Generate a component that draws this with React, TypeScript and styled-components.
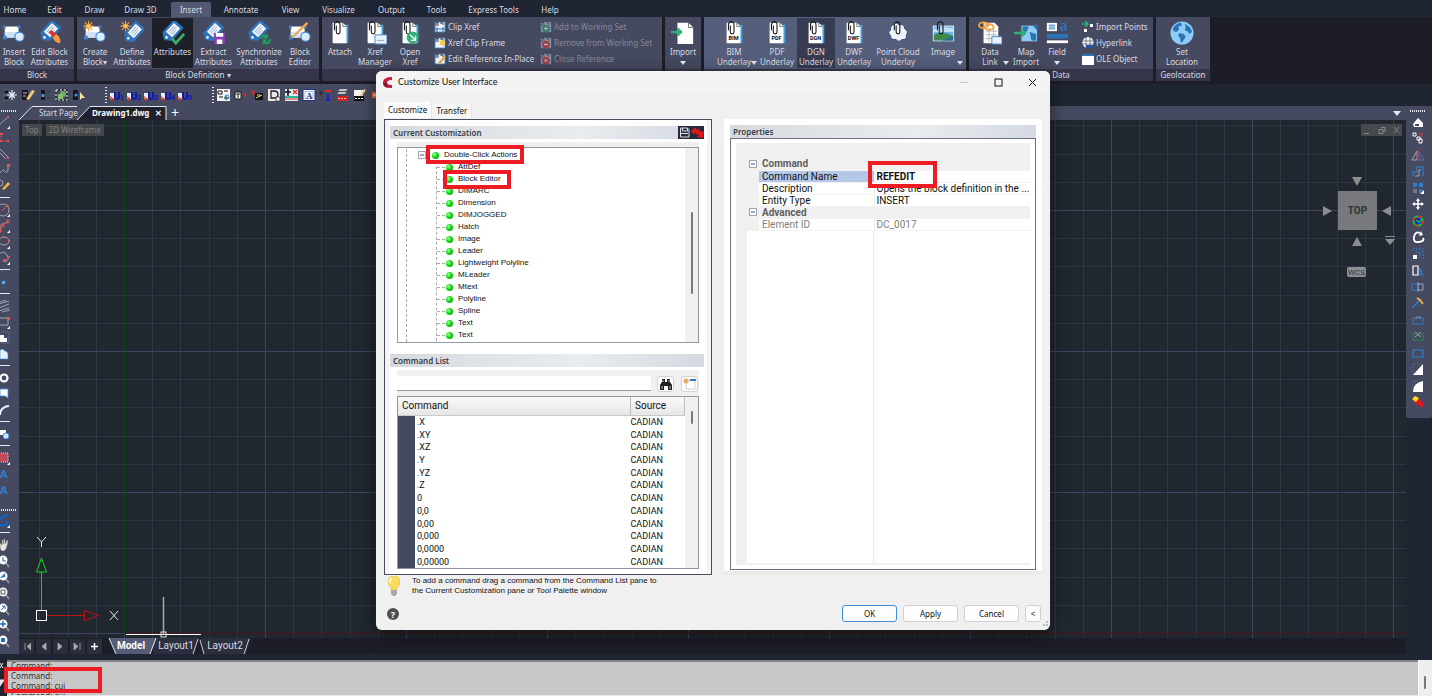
import React, { ReactNode } from "react";
import styled, { createGlobalStyle, css } from "styled-components";

const ui = `"Noto Sans", "Open Sans", sans-serif`;
const compact = `"Liberation Sans", Lato, sans-serif`;
const grid = `Roboto, "Liberation Sans", sans-serif`;
const slate = "#464a60";
const night = "#1f2532";
const ink = "#1c1d27";

const GlobalStyle = createGlobalStyle`
  * { box-sizing: border-box; }
  body { margin: 0; background: ${night}; font-family: ${ui}; font-size: 8px; line-height: 10px; }
  button, input { font: inherit; color: inherit; margin: 0; padding: 0; border: 0; background: none; }
  svg { display: block; flex: none; }
`;

const Page = styled.div`
  position: relative;
  display: flex;
  flex-direction: column;
  height: 100vh;
  min-height: 660px;
  overflow: hidden;
  background: ${night};
  color: #d9dbe2;
  border-right: 1px solid #fff;
`;

/* ---------- menu + ribbon ---------- */
const MenuBar = styled.nav`
  display: flex;
  align-items: flex-end;
  height: 17px;
  padding-top: 2px;
`;
const MenuItem = styled.button<{ $active?: boolean; $w: number }>`
  width: ${(p) => p.$w}px;
  height: 15px;
  border-radius: 2px 2px 0 0;
  background: ${(p) => (p.$active ? "#535973" : "transparent")};
  text-align: center;
  white-space: nowrap;
`;
const Ribbon = styled.div`
  display: flex;
  gap: 3px;
  height: 67px;
  background: ${ink};
`;
const Panel = styled.section<{ $w: number; $lit?: boolean }>`
  display: flex;
  flex-direction: column;
  flex: none;
  width: ${(p) => p.$w}px;
  height: 64px;
  background: ${(p) => (p.$lit ? "#555e7b" : slate)};
`;
const PanelBody = styled.div<{ $pad: number }>`
  display: flex;
  flex: 1;
  padding: 1px 0 1px ${(p) => p.$pad}px;
`;
const PanelLabel = styled.div`
  height: 12px;
  line-height: 11px;
  background: #353649;
  text-align: center;
`;
const BigButton = styled.button<{ $w: number; $dark?: string }>`
  position: relative;
  display: flex;
  flex-direction: column;
  align-items: center;
  flex: none;
  width: ${(p) => p.$w}px;
  padding-top: 3px;
  background: ${(p) => p.$dark || "transparent"};
  white-space: pre-line;
  gap: 2px;
`;
const SmallColumn = styled.div<{ $w: number; $pad?: number; $dim?: boolean }>`
  display: flex;
  flex-direction: column;
  width: ${(p) => p.$w}px;
  padding: 1px 0 0 ${(p) => p.$pad || 0}px;
  gap: 1px;
  ${(p) => p.$dim && css`color: #858897; svg { opacity: 0.6; }`}
`;
const SmallButton = styled.button`
  display: flex;
  align-items: center;
  gap: 2px;
  height: 15px;
  white-space: nowrap;
`;

/* ---------- quick tool strip ---------- */
const Strip = styled.div`
  height: 22px;
`;
const StripTools = styled.div`
  display: flex;
  align-items: center;
  width: 60%;
  height: 22px;
  padding-left: 2px;
  background: ${slate};
`;
const StripButton = styled.button`
  width: 17px;
  height: 16px;
  display: grid;
  place-items: center;
`;
const DotsV = styled.span<{ $ml: number }>`
  width: 2px;
  height: 16px;
  margin: 0 1px 0 ${(p) => p.$ml}px;
  background: repeating-linear-gradient(#e6e7ec 0 1px, transparent 1px 3px);
`;
const DotsH = styled.span`
  flex: none;
  width: 16px;
  height: 2px;
  margin: 4px 0 2px 1px;
  background: repeating-linear-gradient(90deg, #e6e7ec 0 1px, transparent 1px 2px);
`;

/* ---------- work area ---------- */
const Work = styled.div`
  display: flex;
  flex: 1;
  min-height: 0;
`;
const LeftBar = styled.aside`
  display: flex;
  flex-direction: column;
  width: 19px;
  background: ${slate};
  overflow: hidden;
`;
const SideTool = styled.button`
  flex: none;
  width: 12px;
  height: 16px;
  display: grid;
  place-items: center start;
  svg { overflow: visible; }
`;
const SideRule = styled.span`
  flex: none;
  width: 10px;
  height: 1px;
  margin: 3px 0 4px;
  background: #e6e7ec;
`;
const Spacer = styled.div<{ $h: number }>`
  flex: none;
  height: ${(p) => p.$h}px;
`;
const Center = styled.main`
  display: flex;
  flex-direction: column;
  flex: 1;
  min-width: 0;
`;
const RightSide = styled.aside`
  width: 26px;
`;
const RightBar = styled.div`
  display: flex;
  flex-direction: column;
  justify-content: space-between;
  align-items: center;
  height: 312px;
  padding: 0 3px 9px 0;
  background: ${slate};
  border-radius: 0 0 2px 2px;
  & > span { margin-bottom: 0; }
`;
const RightTool = styled.button`
  width: 16px;
  height: 14px;
  display: grid;
  place-items: center;
`;
const DocTabs = styled.div`
  display: flex;
  align-items: center;
  height: 14px;
  background: ${slate};
`;
const DocTab = styled.button<{ $w: number; $active?: boolean }>`
  position: relative;
  width: ${(p) => p.$w}px;
  height: 14px;
  text-align: left;
  padding-left: ${(p) => (p.$active ? 15 : 20)}px;
  white-space: nowrap;
  ${(p) => p.$active && css`font-weight: 700; color: #fff;`}
  & > svg { position: absolute; left: 0; top: 0; }
  & > span { position: relative; }
`;
const TabClose = styled.span`
  margin-left: 6px;
`;
const TabPlus = styled.button`
  font-size: 14px;
  line-height: 14px;
  margin-left: 4px;
  color: #fff;
`;
const TabMenu = styled.button`
  margin-left: auto;
  margin-right: 5px;
`;
const Canvas = styled.div`
  position: relative;
  flex: 1;
  min-height: 0;
  background: #21272f;
  overflow: hidden;
`;
const Fill = styled.svg`
  position: absolute;
  inset: 0;
  width: 100%;
  height: 100%;
`;
const ViewTags = styled.div`
  position: absolute;
  left: 3px;
  top: 4px;
  display: flex;
  gap: 4px;
`;
const ViewTag = styled.button`
  height: 12px;
  padding: 0 3px;
  background: #45484b;
  color: #7d8083;
  line-height: 12px;
`;
const WindowTag = styled.div`
  position: absolute;
  right: 4px;
  top: 4px;
  background: #474a4d;
`;
const CubeBox = styled.div`
  position: absolute;
  right: 10px;
  top: 56px;
`;
const Ucs = styled.svg`
  position: absolute;
  left: 14px;
  bottom: 0;
`;
const LayoutBar = styled.div`
  display: flex;
  align-items: center;
  height: 16px;
  background: ${ink};
  font-family: ${grid};
  font-size: 10px;
`;
const NavButton = styled.button`
  display: grid;
  place-items: center;
  width: 15px;
  height: 15px;
  margin-right: 2px;
  background: #2a2d3a;
`;
const LayoutTab = styled.button<{ $w: number; $overlap?: number; $active?: boolean }>`
  position: relative;
  z-index: ${(p) => (p.$active ? 1 : 0)};
  width: ${(p) => p.$w}px;
  height: 16px;
  margin-left: -${(p) => p.$overlap || 0}px;
  text-align: center;
  & > svg { position: absolute; inset: 0; }
  & > span { position: relative; ${(p) => p.$active && "font-weight: 700; color: #fff;"} }
`;

/* ---------- command line ---------- */
const CommandDock = styled.footer`
  position: relative;
  display: flex;
  height: 36px;
  margin-top: 6px;
`;
const DockGrip = styled.div`
  width: 7px;
  background: #1e2531;
  overflow: hidden;
`;
const CommandLog = styled.div`
  flex: 1;
  background: #c7c7c7;
  border-top: 2px solid #85868a;
  border-bottom: 1px solid #e8e8e8;
  color: #333;
  padding-left: 4px;
  overflow: hidden;
`;
const LogLines = styled.div`
  margin-top: -1px;
`;
const DockScroll = styled.div`
  width: 14px;
  border-left: 1px solid #fff;
  background: #efefef;
  padding: 16px 0 0 5px;
`;
const Thumb = styled.div<{ $h: number }>`
  width: 2px;
  height: ${(p) => p.$h}px;
  background: #77797c;
  border-radius: 1px;
`;
const RedBox = styled.div<{ $x: number; $y: number; $w: number; $h: number }>`
  position: absolute;
  left: ${(p) => p.$x}px;
  top: ${(p) => p.$y}px;
  width: ${(p) => p.$w}px;
  height: ${(p) => p.$h}px;
  border: 4px solid #ed1c24;
  pointer-events: none;
`;

/* ---------- dialog ---------- */
const Dialog = styled.div`
  position: absolute;
  left: 376px;
  top: 71px;
  width: 674px;
  display: flex;
  flex-direction: column;
  background: #f0f0f0;
  border-radius: 6px;
  color: #111;
  box-shadow: 0 4px 18px rgba(0, 0, 0, 0.55), 0 0 1px #888;
  overflow: hidden;
`;
const TitleBar = styled.header`
  display: flex;
  align-items: center;
  height: 22px;
  padding: 0 1px 0 7px;
  background: #f3f3f3;
`;
const Title = styled.h1`
  flex: 1;
  margin: 0 0 0 6px;
  font-family: Lato, ${ui};
  font-size: 9px;
  line-height: 12px;
  font-weight: 400;
`;
const TitleButton = styled.button`
  width: 34px;
  height: 22px;
  display: grid;
  place-items: center;
`;
const DialogTabs = styled.div`
  display: flex;
  align-items: flex-end;
  height: 25px;
  padding: 9px 0 0 8px;
`;
const DialogTab = styled.button<{ $on?: boolean }>`
  height: ${(p) => (p.$on ? 16 : 14)}px;
  padding: 0 4px;
  background: ${(p) => (p.$on ? "#fbfbfb" : "#f5f5f5")};
  border-right: 1px solid #e4e4e4;
`;
const Panes = styled.div`
  display: flex;
  gap: 12px;
  padding: 1px 8px 0;
  height: 457px;
`;
const LeftPane = styled.section`
  display: flex;
  flex-direction: column;
  width: 328px;
  padding: 6px 7px 4px 5px;
  background: #fff;
  border: 1px solid #4a4c5f;
  box-shadow: inset 4px 0 #f4f4f4, inset -4px 0 #f4f4f4;
`;
const RightPane = styled.section`
  display: flex;
  flex-direction: column;
  flex: 1;
  padding: 6px 6px 1px;
  background: #fff;
  border-bottom: 4px solid #ebebeb;
`;
const SectionHead = styled.h2`
  display: flex;
  align-items: center;
  justify-content: space-between;
  flex: none;
  height: 13px;
  margin: 0;
  padding-left: 3px;
  background: linear-gradient(90deg, #d6dade, #e9ecef 60%, #d4dae2);
  color: #39404a;
  font-size: 8px;
  line-height: 13px;
  font-weight: 600;
`;
const HeadTools = styled.span`
  display: flex;
  background: #272a3b;
`;
const HeadTool = styled.button`
  width: 13px;
  height: 13px;
`;
const Inset = styled.div<{ $mt: number }>`
  margin: ${(p) => p.$mt}px 5px 0 7px;
`;
const Band = styled.div<{ $h: number }>`
  height: ${(p) => p.$h}px;
  background: #f0f0f0;
`;
const TreeBox = styled.div`
  position: relative;
  display: flex;
  height: 196px;
  border: 1px solid #9298a1;
  font-family: ${compact};
`;
const TreeList = styled.ul`
  flex: 1;
  margin: 1px 0 0 8px;
  padding: 0 0 0 11px;
  list-style: none;
  border-left: 1px dashed #a9a9a9;
`;
const Branch = styled.ul`
  margin: 0 0 0 18px;
  padding: 0;
  list-style: none;
  border-left: 1px dashed #a9a9a9;
`;
const TreeRow = styled.li`
  display: flex;
  align-items: center;
  height: 12px;
  white-space: nowrap;
`;
const Stub = styled.span<{ $w: number }>`
  width: ${(p) => p.$w}px;
  border-top: 1px dashed #a9a9a9;
`;
const Bullet = styled.i<{ $ml: number }>`
  width: 7px;
  height: 7px;
  margin: 0 5px 0 ${(p) => p.$ml}px;
  border-radius: 50%;
  background: radial-gradient(circle at 35% 35%, #9dff9d, #12d812 45%, #088a08);
`;
const ScrollStrip = styled.div<{ $pt: number }>`
  width: 13px;
  padding: ${(p) => p.$pt}px 0 0 6px;
  background: #f0f0f0;
`;
const SearchRow = styled.div`
  display: flex;
  align-items: center;
  height: 17px;
  gap: 6px;
  background: #f0f0f0;
`;
const Search = styled.input`
  flex: 1;
  min-width: 0;
  height: 15px;
  padding: 0 4px;
  background: #fff;
  border-bottom: 1px solid #9b9b9b;
`;
const IconButton = styled.button`
  display: grid;
  place-items: center;
  width: 17px;
  height: 16px;
  margin-right: 1px;
  background: #fdfdfd;
  border: 1px solid #d4d4d4;
  border-radius: 3px;
`;
const ListBox = styled.div`
  display: flex;
  height: 173px;
  border: 1px solid #9298a1;
  overflow: hidden;
`;
const CommandTable = styled.table`
  flex: 1;
  height: 171px;
  border-collapse: collapse;
  font-family: ${grid};
  font-size: 9px;
  line-height: 12px;
  th {
    height: 18px;
    padding: 0 4px;
    text-align: left;
    font-weight: 400;
    font-size: 10px;
    background: linear-gradient(#fafafa, #e6e6e6);
    border-right: 1px solid #bdbdbd;
    border-bottom: 1px solid #c8c8c8;
  }
  td { padding: 0 0 0 2px; }
  td:first-child { width: 17px; padding: 0; background: #454a5e; }
  td:last-child { width: 54px; padding: 0; }
`;
const PropsBox = styled.div`
  flex: 1;
  display: flex;
  border: 1px solid #6d7180;
  padding: 4px 5px;
`;
const PropsGrid = styled.div`
  flex: 1;
  min-width: 0;
  display: flex;
  flex-direction: column;
  padding: 15px 0 2px 11px;
  background: #f0f0f0;
`;
const PropsTable = styled.table`
  width: 100%;
  table-layout: fixed;
  border-collapse: collapse;
  font-family: ${grid};
  font-size: 10px;
  background: #fff;
  td, th {
    height: 12px;
    padding: 0 2px;
    text-align: left;
    font-weight: 400;
    white-space: nowrap;
    border-bottom: 1px solid #f2f2f2;
    line-height: 11px;
  }
  td:first-child { padding: 0 0 0 2px; background: #f0f0f0; }
  th[scope="row"] { padding-left: 3px; border-right: 1px solid #ececec; }
`;
const ColGutter = styled.col`
  width: 12px;
`;
const ColName = styled.col`
  width: 115px;
`;
const GroupCell = styled.th`
  &&& { padding-left: 3px; background: #f0f0f0; color: #5e5e5e; font-weight: 700; }
`;
const NameCell = styled.th<{ $sel?: boolean; $dim?: boolean }>`
  ${(p) => p.$sel && "background: #b3c7e8;"}
  ${(p) => p.$dim && "color: #808080;"}
`;
const ValueCell = styled.td<{ $bold?: boolean; $dim?: boolean }>`
  &&& {
    ${(p) => p.$bold && "font-weight: 700;"}
    ${(p) => p.$dim && "color: #808080;"}
  }
`;
const PropsRest = styled.div`
  flex: 1;
  background: linear-gradient(90deg, #fff 126px, #ececec 126px, #ececec 127px, #fff 127px);
`;
const Tip = styled.div`
  display: flex;
  gap: 12px;
  height: 22px;
  padding: 1px 0 0 12px;
  font-family: ${compact};
`;
const TipText = styled.p`
  margin: 0;
`;
const Footer = styled.footer`
  display: flex;
  align-items: center;
  height: 33px;
  padding: 0 9px 0 11px;
  gap: 6px;
`;
const Grow = styled.span`
  flex: 1;
`;
const DialogButton = styled.button<{ $w: number; $primary?: boolean }>`
  width: ${(p) => p.$w}px;
  height: 17px;
  background: #fdfdfd;
  border: 1px solid ${(p) => (p.$primary ? "#3f8fd2" : "#d0d0d0")};
  border-radius: 3px;
`;
const SizeGrip = styled.svg`
  position: absolute;
  right: 2px;
  bottom: 2px;
`;

/* ---------- ribbon drawings ---------- */
const Big = ({ children }: { children: ReactNode }) => (
  <svg width="24" height="24" viewBox="0 0 26 26">{children}</svg>
);
const Tag = ({ x = 0, y = 0 }: { x?: number; y?: number }) => (
  <g transform={`translate(${x} ${y}) rotate(-48 12 11)`}>
    <path d="M-1 11 L4 4 H22 Q23 4 23 5 V17 Q23 18 22 18 H4z" fill="#2f73b8" />
    <path d="M7 6.500 H20 V15.500 H7z" fill="#f4f8fd" />
    <path d="M9 9 H18 M9 11.200 H18 M9 13.400 H16" stroke="#86a3c4" strokeWidth="1" />
    <circle cx="3" cy="11" r="1.400" fill="#fff" />
  </g>
);
const Shapes = () => (
  <g>
    <path d="M3 6h15v12H3z" fill="#fff" />
    <path d="M3 12h15v6H3z" fill="#cfe2f7" />
    <circle cx="19" cy="17" r="5" fill="#dbeafb" stroke="#3c82c8" strokeWidth="1.200" />
    <path d="M1 16h4v4H1zM1 5h3v3H1zM17 5h3v3h-3z" fill="#3c82c8" />
  </g>
);
const Spark = () => (
  <g stroke="#f3a53c" strokeWidth="1.200">
    <path d="M6 0v11M.5 5.500h11M2 1.500l8 8M10 1.500l-8 8" />
    <circle cx="6" cy="5.500" r="2" fill="#ffd27a" />
  </g>
);
const Clip = ({ x = 0 }: { x?: number }) => (
  <path
    transform={`translate(${x} 0)`}
    d="M5 5v7q0 2 2 2t2-2V4q0-3-3-3T3 4v6"
    fill="none"
    stroke="#1a1a1a"
    strokeWidth="1.200"
  />
);
const Paper = ({ label }: { label?: string }) => (
  <g>
    <path d="M8 4h14v20H8z" fill="#4aa0d8" />
    <path d="M5 2h11l4 4v18H5z" fill="#fff" />
    <path d="M16 2v4h4" fill="none" stroke="#555" strokeWidth=".8" />
    <Clip x={4} />
    {label && (
      <text x="12.500" y="21" textAnchor="middle" fontFamily="Roboto, sans-serif" fontWeight="700" fontSize="6" fill="#111">
        {label}
      </text>
    )}
  </g>
);
const Globe = () => (
  <g>
    <circle cx="13" cy="13" r="12.500" fill="#8fcbf7" />
    <path d="M3 8q4-6 9-6l1 3-4 1 1 3-3 3-3-1zM10 13l5 1 2 3-3 5-2 2-1-5-2-3zM16 3l6 4 2 5-3 2-2-3-3-1 1-3z" fill="#2c72b5" />
  </g>
);
const bigIcons: Record<string, ReactNode> = {
  insert: <Shapes />,
  edit: (<><Tag x={1} /><path d="M11 12l4-2 5 5-3 3z" fill="#e0342c" /><path d="M16 18l4-4q5 4 4 10-6 0-8-6z" fill="#f59a3b" /></>),
  create: (<><Shapes /><Spark /></>),
  define: (<><Tag x={3} y={1} /><Spark /></>),
  attrs: (<><Tag /><path d="M12 19l4 5 9-10" fill="none" stroke="#3faa6b" strokeWidth="3" /></>),
  extract: (<><Tag /><path d="M13 13h12v12H13z" fill="#8a3fb0" /><path d="M15 13h8v4h-8zM16 20h6v5h-6z" fill="#fff" /></>),
  sync: (<><Tag /><path d="M15 19q2-5 8-2M25 20q-2 6-8 3" fill="none" stroke="#1f9e5c" strokeWidth="2.400" /><path d="M22 13v6h-5zM17 26v-6h5z" fill="#1f9e5c" /></>),
  editor: (<><Shapes /><path d="M3 18L20 1l2 2L6 18z" fill="#f2a640" /></>),
  attach: <Paper />,
  manager: (<><Paper /><path d="M13 15h13v10H13z" fill="#e9f2fb" stroke="#3c82c8" /><path d="M15 21h8" stroke="#8aa" /></>),
  open: (<><Paper /><circle cx="16" cy="18" r="6.500" fill="#2fae78" /><path d="M13 15l6 6M19 16v5h-5" stroke="#fff" strokeWidth="1.500" fill="none" /></>),
  import: (<><path d="M7 2h12l5 5v18H7z" fill="#fff" /><path d="M19 2v5h5" fill="none" stroke="#666" /><path d="M0 12h10M7 8l4 4-4 4" stroke="#2fae78" strokeWidth="2.500" fill="none" /></>),
  bim: <Paper label="BIM" />,
  pdf: <Paper label="PDF" />,
  dgn: <Paper label="DGN" />,
  dwf: <Paper label="DWF" />,
  cloud: (<><path d="M7 5q3-5 7-1 6-1 6 4 5 3 2 7 1 6-5 5-3 4-6 0-6 1-6-4-4-4 0-6-1-4 2-5z" fill="#eef3fa" stroke="#2c4f86" /><Clip x={6} /></>),
  image: (<><path d="M2 5h23v17H2z" fill="#e9f2fb" /><path d="M3 6h21v15H3z" fill="#6cb6e6" /><path d="M3 9q8-4 21-1v4H3z" fill="#bfe3f7" /><path d="M3 21v-6q8-5 21 1v5z" fill="#3f8a4a" /><path d="M12 21l12-5v5z" fill="#2b6f8f" /><Clip x={4} /></>),
  datalink: (<><path d="M6 2h12l4 4v18H6z" fill="#fff" /><path d="M8 11h13M8 15h13M8 19h13M12 8v15M17 8v15" stroke="#9aa" strokeWidth=".8" /><ellipse cx="6" cy="4.500" rx="5" ry="3" fill="none" stroke="#f3a53c" strokeWidth="2" /><ellipse cx="12" cy="6.500" rx="5" ry="3" fill="none" stroke="#f3a53c" strokeWidth="2" /><path d="M15 17h11v8H15z" fill="#e9f2fb" stroke="#3c82c8" /></>),
  map: (<><path d="M8 5h17v17H8z" fill="#8fcbf7" /><path d="M9 6h7l-2 5-4 2zM17 12l7 2v7h-5zM20 5h5v5z" fill="#2c72b5" /><path d="M0 13h11M8 9l4 4-4 4" stroke="#2fae78" strokeWidth="2.500" fill="none" /></>),
  field: (<><path d="M2 2h11v9H2z" fill="#fff" /><path d="M4 4.500h7M4 6.500h7M4 8.500h7" stroke="#2c72b5" /><text x="16" y="11" fontFamily="Liberation Serif, serif" fontWeight="700" fontSize="17" fill="#2c72b5">a</text><path d="M2 14h23v5H2z" fill="#2c72b5" /><path d="M2 21h23v3H2z" fill="#fff" /></>),
  globe: <Globe />,
};
const Caret = () => (
  <svg width="6" height="4" viewBox="0 0 6 4"><path d="M0 0h6L3 4z" fill="#e8e9ee" /></svg>
);
const CaretSpot = styled.span<{ $center?: boolean }>`
  position: absolute;
  bottom: 3px;
  ${(p) => (p.$center ? "left: 50%; margin-left: -3px;" : "right: 0;")}
`;
type Tool = { icon: string; label: string; w: number; dark?: string; caret?: "end" | "mid" };
const BigTool = ({ icon, label, w, dark, caret }: Tool) => (
  <BigButton $w={w} $dark={dark}>
    <Big>{bigIcons[icon]}</Big>
    <span>{label}</span>
    {caret && <CaretSpot $center={caret === "mid"}><Caret /></CaretSpot>}
  </BigButton>
);
const Small = ({ kind }: { kind: string }) => (
  <svg width="12" height="12" viewBox="0 0 12 12">
    {["clip", "frame", "ref", "add", "remove", "close"].includes(kind) && (
      <><path d="M1 1h10v10H1z" fill="#eef4fb" stroke="#3c82c8" strokeWidth=".8" /><path d="M2 5V1.500h2V5M6 2h3v2" fill="none" stroke="#222" strokeWidth=".9" /></>
    )}
    {kind === "clip" && <path d="M1 8h10M3 6v5M9 6v5" stroke="#2c72b5" />}
    {kind === "frame" && <circle cx="8.500" cy="6" r="2.700" fill="#f5cf3f" />}
    {kind === "ref" && <path d="M4 10l6-7 2 1-6 7z" fill="#f3a53c" />}
    {kind === "add" && <><circle cx="6" cy="7.500" r="4" fill="#2f9a68" /><path d="M4 7.500h4M6 5.500v4" stroke="#fff" /></>}
    {kind === "remove" && <><circle cx="6" cy="7.500" r="4" fill="#d03a3a" /><path d="M4 7.500h4" stroke="#fff" strokeWidth="1.400" /></>}
    {kind === "close" && <><circle cx="6" cy="7.500" r="4" fill="#d03a3a" /><path d="M4.500 6l3 3M7.500 6l-3 3" stroke="#fff" /></>}
    {kind === "points" && <><path d="M0 3h5M3 0l3 3-3 3" stroke="#2fae78" strokeWidth="1.600" fill="none" /><path d="M8 3h3v3H8zM2 8h3v3H2z" fill="#fff" /></>}
    {kind === "link" && <><circle cx="6" cy="5.500" r="5.500" fill="#fff" /><path d="M1 4h10M1 7h10M4 0v10M8 0v10" stroke="#464a60" strokeWidth=".7" /><path d="M4 8h8v3H4z" fill="#2456a0" /></>}
    {kind === "ole" && <><path d="M0 1h12v11H0z" fill="#fff" /><path d="M0 1h12v2H0z" fill="#2c72b5" /></>}
  </svg>
);
const SmallTool = ({ kind, label }: { kind: string; label: string }) => (
  <SmallButton><Small kind={kind} />{label}</SmallButton>
);

const menu: [string, number][] = [
  ["Home", 30], ["Edit", 49], ["Draw", 31], ["Draw 3D", 61], ["Insert", 40], ["Annotate", 60], ["View", 39],
  ["Visualize", 57], ["Output", 49], ["Tools", 41], ["Express Tools", 73], ["Help", 40],
];

/* ---------- strip drawings ---------- */
const stripGlyphs: ReactNode[] = [
  <><path d="M0 1h5v4H0zM0 7h5v4H0z" fill="#14151c" stroke="#889" strokeWidth=".6" /><path d="M8 1v10M3 6h10M5 3l6 6M11 3l-6 6" stroke="#dff0ff" strokeWidth="1.200" /></>,
  <><path d="M1 1h6v10H1z" fill="#14151c" /><path d="M2 4h4M2 7h3" stroke="#ccc" /><path d="M5 10l6-9 3 1-6 9z" fill="#f1c477" /></>,
  <><path d="M3 1h4v4H3zM3 8h4v3H3z" fill="#14151c" /><path d="M4 5h2v3H4z" fill="#39a0ee" /><path d="M9 3h3M9 9h3" stroke="#223" /></>,
  <><path d="M1 1h11v10H1z" fill="none" stroke="#14151c" /><path d="M1 1h11v10H1z" fill="none" stroke="#fff" strokeDasharray="2 2" /><circle cx="8" cy="5" r="3" fill="#6bb05f" /><path d="M3 5h5v5H3z" fill="#7fc16a" /></>,
  <><path d="M1 1h5v10H1z" fill="#14151c" /><circle cx="4" cy="6" r="1.500" fill="#39a0ee" /><path d="M8 3v8l2-2h3z" fill="#f3e6a5" /></>,
];
const uGlyph = (n: number) => (
  <>
    <path d="M0 4h4v6H0z" fill="#e9eef9" /><path d="M0 7l4 3-3 2z" fill="#e64424" />
    <path d="M5 3v5q0 2 2 2t2-2V3" fill="none" stroke="#0c1cae" strokeWidth="2" />
    <text x="9.500" y="10.500" fontFamily="Roboto, sans-serif" fontWeight="700" fontSize="8" fill="#1018b8">{n}</text>
  </>
);
const expressGlyphs: ReactNode[] = [
  <><path d="M0 0h13v12H0z" fill="#f4f4f4" /><path d="M1 2h4v3H1zM7 2h4M2 8h4M9 6v5M7 9h5" stroke="#111" fill="none" /><circle cx="10" cy="8" r="2" fill="none" stroke="#29c" /></>,
  <><path d="M1 3h6v7H1z" fill="#fff" stroke="#111" /><path d="M2 5h4M4 5v4" stroke="#111" /><path d="M12 3v6L9 6z" fill="#e22" /></>,
  <><path d="M0 1l5 4M0 5h3" stroke="#e22" strokeWidth="1.400" /><path d="M4 4h8v7H4z" fill="#111" /><path d="M5 9l6-3M6 6h3" stroke="#ffe680" /></>,
  <><path d="M0 0h12v12H0z" fill="#e9e6ea" /><path d="M3 2h3q4 0 4 3.500T6 9H3z" fill="none" stroke="#222" strokeWidth="1.300" /><path d="M8 8h4v4H8z" fill="#f7f7f7" stroke="#222" strokeWidth=".7" /></>,
  <><path d="M0 0h13v12H0z" fill="#dfeeee" /><path d="M0 3h6M3 0v7" stroke="#111" strokeWidth="1.600" /><path d="M8 1l4 4M12 1L8 5" stroke="#e22" strokeWidth="1.300" /><path d="M0 7h13v2H0z" fill="#2bb6a0" /><path d="M0 10h13" stroke="#e22" /></>,
  <><path d="M1 .5h12v11H1z" fill="#f7f9ff" stroke="#203080" /><path d="M3 2.500h8v7H3z" fill="none" stroke="#8090c0" strokeWidth=".6" /><text x="4" y="9.500" fontFamily="Liberation Serif, serif" fontWeight="700" fontSize="9" fill="#203080">A</text></>,
  <><path d="M0 4h4M2 2v4" stroke="#223" /><path d="M6 2h6" stroke="#e22" strokeWidth="2" /><path d="M9 5v6M7 11h4" stroke="#1323d0" strokeWidth="2" /></>,
  <><path d="M4 0l8 0-2 2-8 0zM3 3l8 0-2 2-8 0z" fill="#e9e9e9" stroke="#555" strokeWidth=".5" /><path d="M1 7h11v5H1z" fill="#d92020" /><path d="M2 9.500h9" stroke="#fbb" strokeDasharray="2 1" /></>,
  <><path d="M1 1h9v6H1z" fill="#f4f4f4" /><path d="M1 7h10v5H1z" fill="#111" /><path d="M2 9.500h8" stroke="#fff" strokeDasharray="2 1" /><path d="M7 7l4-7 2 1-4 6z" fill="#f1c477" /></>,
  <><path d="M2 3h8v6H2z" fill="#ee6a40" /><path d="M3 6h8" stroke="#fff" /></>,
];
const Glyph = ({ children }: { children: ReactNode }) => (
  <svg width="14" height="12" viewBox="0 0 14 12">{children}</svg>
);

/* ---------- left tool column ---------- */
const g = "#9fa3af";
const r = "#ee5050";
const corner = <path d="M10 11v3H7z" fill="#fff" />;
const drawTools: (ReactNode | "rule")[] = [
  <><path d="M-2 11L8 2" stroke={g} /><path d="M7 1h2v2H7z" fill={r} />{corner}</>,
  <><path d="M1 3v7h8" stroke={r} fill="none" strokeDasharray="1 1" /><path d="M0 2h3v2H0zM0 9h2v2H0zM7 9h2v2H7z" fill={r} /></>,
  <><path d="M-1 1l10 10M-1 5l7 7" stroke={g} /><path d="M7 10h2v2H7z" fill={r} /></>,
  <><path d="M0 10q4-5 5-2t3 0V3" stroke={g} fill="none" /><path d="M7 1h3v3H7z" fill={r} /></>,
  <><circle cx="0" cy="4" r="3" fill="none" stroke={g} /><path d="M2 10l6-7 2 2-6 6z" fill="#f0b445" /></>,
  "rule",
  <><circle cx="3" cy="7" r="6" fill="none" stroke={g} /><path d="M2 8l5-5M6 2h2v2" stroke={r} fill="none" />{corner}</>,
  <><path d="M0 12q0-7 8-9" stroke={g} fill="none" /><path d="M7 1h2v3H7zM1 5h3v3H1zM0 10h1v3H0z" fill="none" stroke={r} />{corner}</>,
  <><ellipse cx="4" cy="6" rx="5" ry="4" fill="none" stroke={g} /><path d="M3 1h2v2H3zM8 5h2v2H8z" fill={r} />{corner}</>,
  <><path d="M-1 3q5-4 8 1t-2 7" stroke={g} fill="none" /><path d="M3 8h3v3H3zM8 5h2v2H8z" fill={r} />{corner}</>,
  "rule",
  <path d="M2 6h3v3H2z" fill="#7cc4ff" stroke="#1f6fc0" strokeWidth=".6" />,
  "rule",
  <path d="M-1 5l10-3M-1 9l10-4M-1 12l10-3M2 13l8-2M0 3l6-2" stroke={g} />,
  <><path d="M-1 3h9v7H-1z" fill="none" stroke={g} /><path d="M7 2h3v3H7z" fill={r} />{corner}</>,
  <><path d="M-1 1h10v11H-1z" fill="none" stroke="#3b8fd6" strokeDasharray="1 1" /><path d="M0 4h4v3h3v4H0z" fill="#fff" /></>,
  <path d="M0 3q3-2 5 1 3 0 3 4v4H0z" fill="#e6f1fc" stroke="#3b8fd6" strokeWidth=".6" />,
  "rule",
  <circle cx="4" cy="7" r="3.500" fill="none" stroke="#fff" strokeWidth="2.200" />,
  <path d="M0 2h8v9L5 9H0z" fill="#fff" stroke="#3b8fd6" strokeWidth=".8" />,
  <path d="M0 12q0-8 9-9" fill="none" stroke="#e6f1fc" strokeWidth="2" />,
  "rule",
  <><path d="M0 3h6v5H0z" fill="#fff" /><circle cx="6" cy="9" r="3" fill="#cfe4f8" stroke="#3b8fd6" /></>,
  "rule",
  <><path d="M-1 2h9v9H-1z" fill="#c04a5a" stroke="#ddd" strokeDasharray="1 1" />{corner}</>,
  <text x="0" y="11" fontFamily="Noto Sans, sans-serif" fontWeight="700" fontSize="11" fill="#2c7fd0">A</text>,
  <text x="0" y="11" fontFamily="Noto Sans, sans-serif" fontWeight="700" fontSize="11" fill="#2c7fd0">A</text>,
];
const lens = (inner: ReactNode) => (
  <><path d="M6 9l3 4" stroke="#8d8f98" strokeWidth="2" /><circle cx="3" cy="6" r="4.500" fill="#fff" />{inner}</>
);
const viewTools: (ReactNode | "rule")[] = [
  <><path d="M0 6q3-6 8-4M8 7q-2 6-8 4" fill="none" stroke="#1561c4" strokeWidth="2.500" />{corner}</>,
  "rule",
  <path d="M0 6l1-1 1 2V2h1v4l1-5h1v5l2-4 1 1-1 5q-1 5-4 5T0 8z" fill="#e9e4dc" stroke="#777" strokeWidth=".5" />,
  lens(<path d="M3 3v4h3" stroke="#1f6fc0" fill="none" />),
  lens(<path d="M0 8l5-5v4z" fill="#1f6fc0" />),
  lens(<path d="M1 4h4v4H1z" fill="none" stroke="#555" />),
  lens(<path d="M1 8l4-4M2 4h3v3" stroke="#1f6fc0" fill="none" />),
  lens(<path d="M0 6h6M3 3v6" stroke="#1f6fc0" strokeWidth="1.500" />),
  lens(<path d="M1 4h4v4H1z" fill="#1f6fc0" />),
];
const SideIcon = ({ children }: { children: ReactNode }) => (
  <svg width="12" height="14" viewBox="0 0 12 14">{children}</svg>
);
const sideItems = (list: (ReactNode | "rule")[]) =>
  list.map((t, i) => (t === "rule" ? <SideRule key={i} /> : <SideTool key={i}><SideIcon>{t}</SideIcon></SideTool>));

const b = "#2c7fd0";
const modifyTools: ReactNode[] = [
  <><path d="M2 8l5-6 5 5v4H3z" fill="#fff" /><path d="M4 8h4v2H4z" fill={slate} /></>,
  <><path d="M2 1h3v3H2zM6 5h3v3H6zM8 7h3v4H8z" fill="none" stroke="#fff" /><path d="M8 2h3v3" fill="none" stroke="#e33" strokeWidth="1.200" /></>,
  <><path d="M6 2v9H1z" fill="none" stroke={g} /><path d="M8 3v8h5z" fill="none" stroke={b} /><path d="M7 0v12" stroke="#e22" /></>,
  <><path d="M2 11V7h4V2h6v9" fill="none" stroke={b} strokeWidth="1.200" /><path d="M4 11h4V5h2" fill="none" stroke={g} /></>,
  <><path d="M2 1h4v4H2zM8 1h4v4H8zM8 7h3v4H8z" fill={b} /><path d="M2 7h4v4H2z" fill="#777" /><path d="M13 8v4H9z" fill="#fff" /></>,
  <><path d="M7 1v10M2 6h10" stroke="#fff" strokeWidth="1.500" /><path d="M7 0l2 3H5zM7 12l2-3H5zM1 6l3-2v4zM13 6l-3-2v4z" fill="#fff" /></>,
  <><circle cx="7" cy="6" r="4.500" fill="#1528d8" stroke="#19c428" strokeWidth="2" /><circle cx="7" cy="6" r="4.500" fill="none" stroke="#e22" strokeWidth="2" strokeDasharray="3 4" /><path d="M5 5l3 2 2-2" stroke="#19c428" strokeWidth="1.500" fill="none" /></>,
  <><path d="M9 2q-5-2-6 4t5 5 4-4" fill="none" stroke="#fff" strokeWidth="1.800" /><path d="M8 5l4-1-2-4z" fill="#fff" /></>,
  <><path d="M2 1h10v10" fill="none" stroke={b} strokeDasharray="2 1" /><path d="M5 4h4v6" fill="none" stroke={b} strokeDasharray="2 1" /><path d="M2 7h4v4H2z" fill="#fff" /></>,
  <><path d="M2 2h5v9H2z" fill="none" stroke="#fff" strokeWidth="1.200" /><path d="M9 4l3 7H9z" fill="none" stroke={b} /></>,
  <><path d="M1 3h6v6H1z" fill="none" stroke={b} strokeWidth="1.200" /><path d="M7 1v10M7 3h5v6H7" fill="none" stroke={g} /></>,
  <><path d="M1 11l8-8" stroke={b} strokeWidth="1.400" /><path d="M6 1l3 2 3 4" fill="none" stroke="#f0b445" strokeWidth="1.800" /></>,
  <><path d="M2 10V4h3M9 4h3v6H2" fill="none" stroke={b} /><path d="M5 5l2-3M9 2l-1 3" stroke={g} /></>,
  <><path d="M2 10V4h2M10 4h2v6H2" fill="none" stroke="#1f8a4c" strokeWidth="1.200" /><path d="M4 2l6 5M10 2L4 7" stroke={g} /></>,
  <path d="M2 3h10v7H2z" fill="none" stroke={b} strokeWidth="1.200" />,
  <><path d="M2 12L12 1v11z" fill="#fff" /><path d="M2 11V1h8" fill="none" stroke={b} strokeDasharray="1 1" /></>,
  <><path d="M2 12Q2 3 12 1v11z" fill="#fff" /><path d="M2 7V1h6" fill="none" stroke={b} strokeDasharray="1 1" /></>,
  <><path d="M2 3l2-2 4 2 5 5-2 4-5-4-4-2z" fill="#e01818" /><path d="M1 3l3-3 4 2-3 4z" fill="#ffe01a" /></>,
];

const DrawingGrid = () => {
  const lines = [28, 56, 85, 113];
  return (
    <Fill>
      <defs>
        <pattern id="grid" x="105" y="90" width="141" height="141" patternUnits="userSpaceOnUse">
          {lines.map((v) => (
            <path key={v} d={`M${v + 0.5} 0V141M0 ${v + 0.5}H141`} stroke="#2f3548" />
          ))}
          <path d="M.5 0V141M0 .5H141" stroke="#3f4560" />
        </pattern>
      </defs>
      <rect width="100%" height="100%" fill="url(#grid)" />
      <rect x="105" y="0" width="1" height="513" fill="#0b4a14" />
      <rect x="105" y="513" width="100%" height="1" fill="#501218" />
    </Fill>
  );
};

const ViewCube = () => (
  <svg width="74" height="104" viewBox="0 0 74 104">
    <g fill="#8c8e91">
      <path d="M30 1h10l-5 9zM1 30v10l9-5zM69 30v10l-9-5zM30 70h10l-5-9zM63 60h10v1H63zM63 63h10l-5 6z" />
      <rect x="16" y="15" width="39" height="39" fill="#77797c" />
      <rect x="25" y="91" width="19" height="10" rx="2" fill="#8c8e91" />
    </g>
    <text x="35.500" y="38" textAnchor="middle" fontFamily="Roboto, sans-serif" fontWeight="700" fontSize="10" fill="#2f3236">TOP</text>
    <text x="34.500" y="99" textAnchor="middle" fontFamily="Roboto, sans-serif" fontSize="8" fill="#2f3236">WCS</text>
  </svg>
);

const DocShape = ({ w, fill, close }: { w: number; fill: string; close?: boolean }) => (
  <svg width={w} height="14" viewBox={`0 0 ${w} 14`}>
    <path d={`M0 14L13 .5H${w - 1}V14`} fill={fill} stroke="#e6e7ec" strokeWidth={close ? 1 : 0} />
    {!close && <path d={`M0 14L13 .5H${w}`} fill="none" stroke="#e6e7ec" />}
  </svg>
);

const actions = ["AttDef", "Block Editor", "DIMARC", "Dimension", "DIMJOGGED", "Hatch", "Image", "Leader",
  "Lightweight Polyline", "MLeader", "Mtext", "Polyline", "Spline", "Text", "Text"];
const commands = [".X", ".XY", ".XZ", ".Y", ".YZ", ".Z", "0", "0,0", "0,00", "0,000", "0,0000", "0,00000"];

const Minus = () => (
  <svg width="8" height="8" viewBox="0 0 8 8">
    <rect x=".5" y=".5" width="7" height="7" fill="#fafafa" stroke="#a3a6ad" /><path d="M2 4h4" stroke="#33589c" />
  </svg>
);

const CustomizeDialog = () => (
  <Dialog role="dialog" aria-label="Customize User Interface">
    <TitleBar>
      <svg width="9" height="11" viewBox="0 0 9 11">
        <path d="M9 0Q0 0 0 5.500T9 11V8Q4 8 4 5.500T9 3z" fill="#c21f3a" /><path d="M0 5.500Q0 10 5 11L4 6z" fill="#8f1530" />
      </svg>
      <Title>Customize User Interface</Title>
      <TitleButton aria-label="Minimize"><svg width="9" height="9"><path d="M0 4.500h8" stroke="#c6c6c6" /></svg></TitleButton>
      <TitleButton aria-label="Maximize"><svg width="9" height="9"><rect x="1" y="1" width="7" height="7" fill="none" stroke="#111" /></svg></TitleButton>
      <TitleButton aria-label="Close"><svg width="9" height="9"><path d="M1 1l7 7M8 1L1 8" stroke="#111" /></svg></TitleButton>
    </TitleBar>
    <DialogTabs>
      <DialogTab $on>Customize</DialogTab>
      <DialogTab>Transfer</DialogTab>
    </DialogTabs>
    <Panes>
      <LeftPane>
        <SectionHead>
          Current Customization
          <HeadTools>
            <HeadTool aria-label="Save"><svg width="13" height="13"><path d="M2.500 2h7l1.500 1.500V11H2.500zM4.500 2v3h5V2M3 7.500h7" fill="none" stroke="#dfe2ea" /></svg></HeadTool>
            <HeadTool aria-label="Reset"><svg width="13" height="13"><path d="M0 5l5-4v2q4 0 5 3l3-1-1 7-6-1 2-2Q5 9 4 6L3 9z" fill="#e01818" /></svg></HeadTool>
          </HeadTools>
        </SectionHead>
        <Inset $mt={3}>
          <Band $h={5} />
          <TreeBox>
            <TreeList>
              <TreeRow><Minus /><Stub $w={3} /><Bullet $ml={3} />Double-Click Actions</TreeRow>
              <li>
                <Branch>
                  {actions.map((a, i) => (
                    <TreeRow key={i}><Stub $w={8} /><Bullet $ml={1} />{a}</TreeRow>
                  ))}
                </Branch>
              </li>
            </TreeList>
            <ScrollStrip $pt={64}><Thumb $h={82} /></ScrollStrip>
            <RedBox $x={28} $y={-3} $w={98} $h={19} />
            <RedBox $x={45} $y={22} $w={68} $h={19} />
          </TreeBox>
        </Inset>
        <Spacer $h={11} />
        <SectionHead>Command List</SectionHead>
        <Inset $mt={3}>
          <Band $h={5} />
          <SearchRow>
            <Search aria-label="Filter commands" />
            <IconButton aria-label="Find">
              <svg width="12" height="12" viewBox="0 0 12 12"><path d="M2 1h3v3h2V1h3v3l2 3v5H8V8H4v4H0V7l2-3z" fill="#222" /><path d="M2 8v3M10 8v3M3 2v2M9 2v2" stroke="#eee" strokeWidth=".8" /></svg>
            </IconButton>
            <IconButton aria-label="New command">
              <svg width="13" height="12" viewBox="0 0 13 12"><path d="M4 2h8v9H3V5z" fill="#fff" stroke="#b9bdc4" strokeWidth=".7" /><path d="M7 1h6v2H7z" fill={b} /><path d="M3 0v6M0 3h6M1 1l4 4M5 1L1 5" stroke="#ea9a3c" /></svg>
            </IconButton>
          </SearchRow>
          <Band $h={4} />
          <ListBox>
            <CommandTable>
              <thead><tr><th colSpan={2}>Command</th><th>Source</th></tr></thead>
              <tbody>
                {commands.map((c) => (
                  <tr key={c}><td /><td>{c}</td><td>CADIAN</td></tr>
                ))}
              </tbody>
            </CommandTable>
            <ScrollStrip $pt={14}><Thumb $h={13} /></ScrollStrip>
          </ListBox>
        </Inset>
      </LeftPane>
      <RightPane>
        <SectionHead>Properties</SectionHead>
        <PropsBox>
          <PropsGrid>
            <PropsTable>
              <colgroup><ColGutter /><ColName /><col /></colgroup>
              <tbody>
                <tr><td><Minus /></td><GroupCell colSpan={2}>Command</GroupCell></tr>
                <tr><td /><NameCell scope="row" $sel>Command Name</NameCell><ValueCell $bold>REFEDIT</ValueCell></tr>
                <tr><td /><NameCell scope="row">Description</NameCell><ValueCell>Opens the block definition in the ...</ValueCell></tr>
                <tr><td /><NameCell scope="row">Entity Type</NameCell><ValueCell>INSERT</ValueCell></tr>
                <tr><td><Minus /></td><GroupCell colSpan={2}>Advanced</GroupCell></tr>
                <tr><td /><NameCell scope="row" $dim>Element ID</NameCell><ValueCell $dim>DC_0017</ValueCell></tr>
              </tbody>
            </PropsTable>
            <PropsRest />
          </PropsGrid>
        </PropsBox>
      </RightPane>
    </Panes>
    <Tip>
      <svg width="12" height="20" viewBox="0 0 12 20">
        <path d="M6 0q6 0 6 6 0 3-3 6v2H3v-2Q0 9 0 6q0-6 6-6z" fill="#f8dc5a" stroke="#e0b83c" strokeWidth=".6" />
        <path d="M4 2q-3 2-2 5" stroke="#fff8d0" strokeWidth="2" fill="none" /><path d="M3 14h6v4l-2 2H5l-2-2z" fill="#a7a9ad" />
      </svg>
      <TipText>To add a command drag a command from the Command List pane to<br />the Current Customization pane or Tool Palette window</TipText>
    </Tip>
    <Footer>
      <svg width="12" height="12" viewBox="0 0 12 12">
        <circle cx="6" cy="6" r="6" fill="#4f4f4f" />
        <text x="6" y="9.500" textAnchor="middle" fontFamily="Noto Sans, sans-serif" fontWeight="700" fontSize="9" fill="#fff">?</text>
      </svg>
      <Grow />
      <DialogButton $w={55} $primary>OK</DialogButton>
      <DialogButton $w={55}>Apply</DialogButton>
      <DialogButton $w={55}>Cancel</DialogButton>
      <DialogButton $w={16}>&lt;</DialogButton>
    </Footer>
    <SizeGrip width="7" height="7"><path d="M5 0h2v2H5zM5 3h2v2H5zM2 3h2v2H2z" fill="#bcbcbc" /></SizeGrip>
    <RedBox $x={492} $y={90} $w={69} $h={27} />
  </Dialog>
);

const navPaths = ["M3 1v7M9 1v7L5 4.500z", "M7 1v7L3 4.500z", "M2 1v7l4-3.500z", "M7 1v7M1 1v7l4-3.500z"];

export default function App() {
  return (
    <Page>
      <GlobalStyle />
      <MenuBar>
        {menu.map(([m, w]) => (
          <MenuItem key={m} $w={w} $active={m === "Insert"}>{m}</MenuItem>
        ))}
      </MenuBar>
      <Ribbon>
        <Panel $w={74}>
          <PanelBody $pad={0}>
            <BigTool icon="insert" label={"Insert\nBlock"} w={28} />
            <BigTool icon="edit" label={"Edit Block\nAttributes"} w={43} />
          </PanelBody>
          <PanelLabel>Block</PanelLabel>
        </Panel>
        <Panel $w={242}>
          <PanelBody $pad={1}>
            <BigTool icon="create" label={"Create\nBlock▾"} w={34} />
            <BigTool icon="define" label={"Define\nAttributes"} w={40} />
            <BigTool icon="attrs" label="Attributes" w={41} dark="#1d1f29" />
            <BigTool icon="extract" label={"Extract\nAttributes"} w={41} />
            <BigTool icon="sync" label={"Synchronize\nAttributes"} w={50} />
            <BigTool icon="editor" label={"Block\nEditor"} w={32} />
          </PanelBody>
          <PanelLabel>Block Definition ▾</PanelLabel>
        </Panel>
        <Panel $w={340}>
          <PanelBody $pad={3}>
            <BigTool icon="attach" label="Attach" w={30} />
            <BigTool icon="manager" label={"Xref\nManager"} w={40} />
            <BigTool icon="open" label={"Open\nXref"} w={30} />
            <SmallColumn $w={115} $pad={9}>
              <SmallTool kind="clip" label="Clip Xref" />
              <SmallTool kind="frame" label="Xref Clip Frame" />
              <SmallTool kind="ref" label="Edit Reference In-Place" />
            </SmallColumn>
            <SmallColumn $w={118} $dim>
              <SmallTool kind="add" label="Add to Working Set" />
              <SmallTool kind="remove" label="Remove from Working Set" />
              <SmallTool kind="close" label="Close Reference" />
            </SmallColumn>
          </PanelBody>
          <PanelLabel />
        </Panel>
        <Panel $w={36}>
          <PanelBody $pad={0}><BigTool icon="import" label="Import" w={36} caret="mid" /></PanelBody>
          <PanelLabel />
        </Panel>
        <Panel $w={262} $lit>
          <PanelBody $pad={7}>
            <BigTool icon="bim" label={"BIM\nUnderlay"} w={46} caret="end" />
            <BigTool icon="pdf" label={"PDF\nUnderlay"} w={40} />
            <BigTool icon="dgn" label={"DGN\nUnderlay"} w={38} dark="#373c52" />
            <BigTool icon="dwf" label={"DWF\nUnderlay"} w={38} />
            <BigTool icon="cloud" label={"Point Cloud\nUnderlay"} w={50} />
            <BigTool icon="image" label="Image" w={40} caret="end" />
          </PanelBody>
          <PanelLabel />
        </Panel>
        <Panel $w={184}>
          <PanelBody $pad={2}>
            <BigTool icon="datalink" label={"Data\nLink"} w={38} caret="end" />
            <BigTool icon="map" label={"Map\nImport"} w={34} />
            <BigTool icon="field" label="Field" w={28} caret="mid" />
            <SmallColumn $w={82} $pad={11}>
              <SmallTool kind="points" label="Import Points" />
              <SmallTool kind="link" label="Hyperlink" />
              <SmallTool kind="ole" label="OLE Object" />
            </SmallColumn>
          </PanelBody>
          <PanelLabel>Data</PanelLabel>
        </Panel>
        <Panel $w={54}>
          <PanelBody $pad={0}><BigTool icon="globe" label={"Set\nLocation"} w={52} /></PanelBody>
          <PanelLabel>Geolocation</PanelLabel>
        </Panel>
      </Ribbon>
      <Strip>
        <StripTools>
          {stripGlyphs.map((s, i) => <StripButton key={i}><Glyph>{s}</Glyph></StripButton>)}
          <DotsV $ml={18} />
          {[1, 2, 3, 4, 5].map((n) => <StripButton key={n}><Glyph>{uGlyph(n)}</Glyph></StripButton>)}
          <DotsV $ml={19} />
          {expressGlyphs.map((s, i) => <StripButton key={i}><Glyph>{s}</Glyph></StripButton>)}
        </StripTools>
      </Strip>
      <Work>
        <LeftBar>
          <DotsH />
          {sideItems(drawTools)}
          <Spacer $h={7} />
          <DotsH />
          {sideItems(viewTools)}
        </LeftBar>
        <Center>
          <DocTabs>
            <Spacer $h={14} />
            <DocTab $w={58}><DocShape w={58} fill={slate} /><span>Start Page</span></DocTab>
            <DocTab $w={90} $active><DocShape w={90} fill="#20222d" close /><span>Drawing1.dwg</span><TabClose>✕</TabClose></DocTab>
            <TabPlus>+</TabPlus>
            <TabMenu aria-label="Drawing list"><svg width="8" height="5"><path d="M0 0h8L4 5z" fill="#e8e9ee" /></svg></TabMenu>
          </DocTabs>
          <Canvas>
            <DrawingGrid />
            <ViewTags><ViewTag>Top</ViewTag><ViewTag>2D Wireframe</ViewTag></ViewTags>
            <WindowTag>
              <svg width="41" height="12" viewBox="0 0 41 12"><path d="M3 9.500h5M18 5.500h4v4h-4zM20 3.500h4v4h-2M33 3l5 6M38 3l-5 6" fill="none" stroke="#85888b" /></svg>
            </WindowTag>
            <CubeBox><ViewCube /></CubeBox>
            <Ucs width="180" height="110" viewBox="0 0 180 110">
              <path d="M8.500 82V44M3.500 44h10L8.500 30z" fill="none" stroke="#15d615" />
              <path d="M13 87.500h38M51.500 82.500v10l14-5z" fill="none" stroke="#b81414" />
              <rect x="3.500" y="82.500" width="10" height="10" fill="none" stroke="#fff" />
              <path d="M4 9l4.500 5L13 9M8.500 14v5M77 83l8 9M85 83l-8 9" stroke="#e6e6e6" fill="none" />
              <path d="M130.500 69v37" stroke="#a8a8a8" strokeWidth="1.500" /><path d="M93 106.500h75" stroke="#fff" />
              <rect x="128" y="104" width="5" height="5" fill="none" stroke="#ddd" />
            </Ucs>
          </Canvas>
          <LayoutBar>
            {navPaths.map((d) => (
              <NavButton key={d}><svg width="9" height="9"><path d={d} fill="#a7aab3" stroke="#a7aab3" strokeWidth=".8" /></svg></NavButton>
            ))}
            <NavButton aria-label="Add layout"><svg width="9" height="9"><path d="M4.500 1v7M1 4.500h7" stroke="#fff" strokeWidth="1.500" /></svg></NavButton>
            <LayoutTab $w={54} $active><svg width="54" height="16"><path d="M5 0l7 16h34l6-16z" fill="#565c78" /><path d="M5 0l7 16M46 16l6-16" stroke="#e6e7ec" /></svg><span>Model</span></LayoutTab>
            <LayoutTab $w={46} $overlap={5}><svg width="46" height="16"><path d="M0 0h46l-5 16H0z" fill="#2b2f3e" /><path d="M40 16l5-15" stroke="#c6c8d0" /></svg><span>Layout1</span></LayoutTab>
            <LayoutTab $w={52}><svg width="52" height="16"><path d="M0 0h52l-5 16H5z" fill="#2b2f3e" /><path d="M45 16l5-15M1 2l4 14" stroke="#c6c8d0" /></svg><span>Layout2</span></LayoutTab>
          </LayoutBar>
        </Center>
        <RightSide>
          <RightBar>
            <DotsH />
            {modifyTools.map((t, i) => <RightTool key={i}><Glyph>{t}</Glyph></RightTool>)}
          </RightBar>
        </RightSide>
      </Work>
      <CommandDock>
        <DockGrip>
          <svg width="7" height="36"><path d="M0 3l3 5M3 3L0 8M0 20h4L0 26z" stroke="#e6e7ec" fill="#e6e7ec" /></svg>
        </DockGrip>
        <CommandLog><LogLines>Command:<br />Command:<br />Command: cui<br />Command: cui</LogLines></CommandLog>
        <DockScroll><Thumb $h={13} /></DockScroll>
        <RedBox $x={4} $y={7} $w={98} $h={26} />
      </CommandDock>
      <CustomizeDialog />
    </Page>
  );
}
